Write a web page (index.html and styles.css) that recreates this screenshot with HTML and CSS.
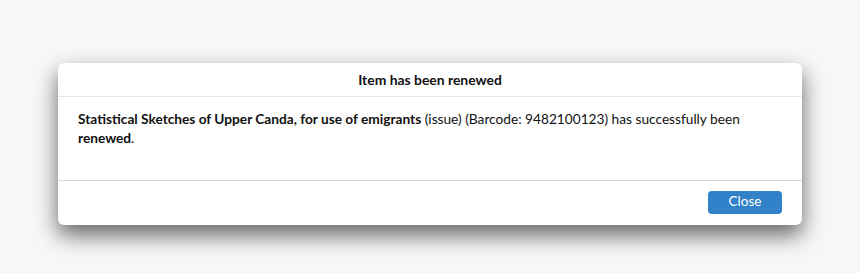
FILE: index.html
```html
<!DOCTYPE html>
<html>
<head>
<meta charset="utf-8">
<link rel="stylesheet" href="styles.css">
</head>
<body>
<div class="modal">
  <div class="modal-header">Item has been renewed</div>
  <div class="modal-body">
    <p><strong>Statistical Sketches of Upper Canda, for use of emigrants</strong> (issue) (Barcode: 9482100123) has successfully been <strong>renewed</strong>.</p>
  </div>
  <div class="modal-footer">
    <button class="btn-close">Close</button>
  </div>
</div>
</body>
</html>
```
FILE: styles.css
```css
html {
  background: #f7f7f7;
}
body {
  margin: 0;
  padding: 63px 58px 0;
  min-height: 273px;
  box-sizing: border-box;
  font-family: Lato, "Open Sans", sans-serif;
  color: #111;
}
.modal {
  background: #fff;
  border-radius: 6px;
  box-shadow: 0 10px 22px rgba(0, 0, 0, 0.6);
}
.modal-header {
  height: 33px;
  line-height: 34px;
  text-align: center;
  font-weight: bold;
  font-size: 13.9px;
  border-bottom: 1px solid #e5e5e5;
}
.modal-body {
  padding: 12px 20px 0;
  height: 71px;
  border-bottom: 1px solid #d5d5d5;
}
.modal-body p {
  margin: 0;
  font-size: 13.7px;
  line-height: 19px;
}
.modal-footer {
  display: flex;
  justify-content: flex-end;
  padding: 10px 20px 11px;
}
.btn-close {
  width: 74px;
  height: 23px;
  border: none;
  border-radius: 4px;
  background: #3182c8;
  color: #fff;
  font-family: inherit;
  font-size: 13.5px;
  line-height: 21px;
  padding: 0 0 2px;
}
```
